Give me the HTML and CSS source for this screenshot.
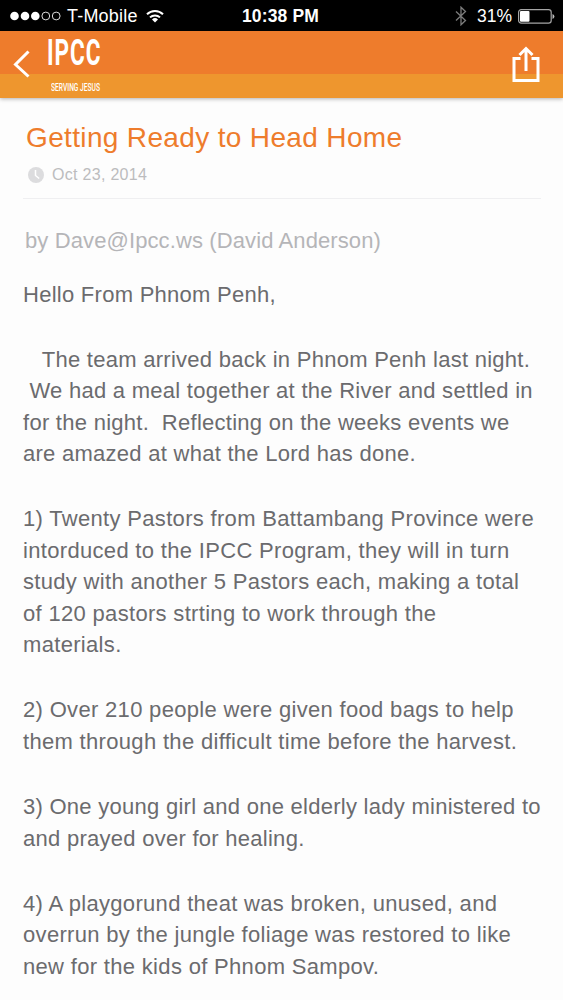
FILE: index.html
```html
<!DOCTYPE html>
<html lang="en">
<head>
  <meta charset="UTF-8">
  <meta name="viewport" content="width=device-width, initial-scale=1.0">
  <title>Getting Ready to Head Home</title>
  <link rel="stylesheet" href="styles.css">
</head>
<body>

  <!-- Status Bar -->
  <div class="status-bar">
    <div class="status-left">
      <svg class="signal" width="52" height="10" viewBox="0 0 52 10">
        <g fill="#fff">
          <circle cx="4.5" cy="5" r="4.3"/>
          <circle cx="15" cy="5" r="4.3"/>
          <circle cx="25.3" cy="5" r="4.3"/>
        </g>
        <g fill="none" stroke="#ddd" stroke-width="1">
          <circle cx="35.8" cy="5" r="3.9"/>
          <circle cx="46.2" cy="5" r="3.9"/>
        </g>
      </svg>
      <span class="carrier">T-Mobile</span>
      <svg class="wifi" width="18" height="14" viewBox="0 0 18 14">
        <g fill="none" stroke="#fff" stroke-width="2">
          <path d="M1 5.2a11.4 11.4 0 0 1 16 0"/>
          <path d="M4 8.4a7.2 7.2 0 0 1 10 0"/>
        </g>
        <path d="M9 13.4 6 10.4a4.3 4.3 0 0 1 6 0z" fill="#fff"/>
      </svg>
    </div>
    <span class="time">10:38 PM</span>
    <div class="status-right">
      <svg class="bluetooth" width="12" height="20" viewBox="0 0 12 20">
        <path d="M1 5.5l9.500 9L6 18.800V1.200l4.500 4.300-9.500 9" fill="none" stroke="#7c7c7c" stroke-width="1.3"/>
      </svg>
      <span class="percent">31%</span>
      <svg class="battery" width="37" height="15" viewBox="0 0 37 15">
        <rect x=".6" y=".6" width="32.6" height="13.6" rx="2.6" fill="none" stroke="#a5a5a5" stroke-width="1.2"/>
        <rect x="2" y="2" width="9.5" height="10.8" rx="1" fill="#fff"/>
        <path d="M34.5 5a2.6 2.6 0 0 1 0 5z" fill="#bbb"/>
      </svg>
    </div>
  </div>

  <!-- Header -->
  <header class="nav-bar">
    <svg class="back" width="18" height="30" viewBox="0 0 18 30">
      <path d="M15.500 1.500 2.500 14.500l13 12" fill="none" stroke="#fff" stroke-width="3"/>
    </svg>
    <div class="logo">
      <span class="logo-name">IPCC</span>
      <span class="logo-tagline">SERVING JESUS</span>
    </div>
    <svg class="share" width="28" height="37" viewBox="0 0 28 37">
      <g fill="none" stroke="#fff" stroke-width="3">
        <path d="M8.500 12.500H2v22h24v-22h-6.500"/>
        <path d="M14 25V2.500M7.500 9 14 2.500 20.500 9"/>
      </g>
    </svg>
  </header>

  <!-- Article -->
  <main class="article">
    <h1 class="title">Getting Ready to Head Home</h1>
    <div class="date">
      <svg class="clock" width="16" height="16" viewBox="0 0 16 16">
        <circle cx="8" cy="8" r="8" fill="#dcdcde"/>
        <path d="M7.500 3v5.500l3.700 3" fill="none" stroke="#fff" stroke-width="1.500"/>
      </svg>
      <span>Oct 23, 2014</span>
    </div>
    <p class="author">by Dave@Ipcc.ws (David Anderson)</p>

    <div class="content">
      <p>Hello From Phnom Penh,</p>
      <p>&nbsp;&nbsp; The team arrived back in Phnom Penh last night.<br>&nbsp;We had a meal together at the River and settled in<br>for the night.&nbsp; Reflecting on the weeks events we<br>are amazed at what the Lord has done.</p>
      <p class="loose">1) Twenty Pastors from Battambang Province were<br>intorduced to the IPCC Program, they will in turn<br>study with another 5 Pastors each, making a total<br>of 120 pastors strting to work through the<br>materials.</p>
      <p class="loose">2) Over 210 people were given food bags to help<br>them through the difficult time before the harvest.</p>
      <p>3) One young girl and one elderly lady ministered to<br>and prayed over for healing.</p>
      <p class="loose">4) A playgorund theat was broken, unused, and<br>overrun by the jungle foliage was restored to like<br>new for the kids of Phnom Sampov.</p>
    </div>
  </main>

</body>
</html>
```
FILE: styles.css
```css
/* Basic Reset */
* {
  margin: 0;
  padding: 0;
  box-sizing: border-box;
}

body {
  font-family: "Liberation Sans", Arial, sans-serif;
  background: #fdfdfd;
  height: 1000px;
  overflow: hidden;
}

svg {
  display: block;
}

/* Status Bar */
.status-bar {
  display: grid;
  grid-template-columns: 1fr auto 1fr;
  align-items: center;
  height: 31px;
  padding: 1px 8px 0 10px;
  background: #000;
  color: #fff;
  font-size: 18px;
}

.status-left,
.status-right {
  display: flex;
  align-items: center;
}

.status-right {
  justify-content: flex-end;
}

.carrier {
  margin: 0 8px 0 5px;
  letter-spacing: 0.2px;
}

.time {
  padding-right: 4px;
  font-weight: bold;
  font-size: 17.5px;
  letter-spacing: 0.15px;
}

.percent {
  margin: 0 6px 0 10px;
  font-size: 17.5px;
}

/* Header */
.nav-bar {
  display: flex;
  align-items: flex-start;
  height: 67px;
  padding: 0 23px 0 13px;
  background: linear-gradient(#ee7c2c 0 43.5px, #ee962e 43.5px);
  box-shadow: 0 1px 4px rgba(0, 0, 0, 0.3);
  color: #fff;
}

.back {
  margin-top: 19px;
}

.logo {
  display: flex;
  flex-direction: column;
  width: 60px;
  margin-left: 16px;
  font-family: Roboto, sans-serif;
  white-space: nowrap;
}

.logo-name {
  font-size: 37px;
  font-weight: 700;
  line-height: 44px;
  letter-spacing: 1.5px;
  transform: scaleX(0.61);
  transform-origin: left;
}

.logo-tagline {
  margin: 7px 0 0 4px;
  font-size: 10.5px;
  font-weight: 500;
  line-height: 12px;
  transform: scaleX(0.635);
  transform-origin: left;
}

.share {
  margin: 15px 0 0 auto;
}

/* Article */
.article {
  padding: 22px 22px 0 23px;
}

.title {
  padding-left: 3px;
  color: #ee7c2c;
  font-size: 28px;
  font-weight: normal;
  line-height: 36px;
  letter-spacing: 0.35px;
}

.date {
  display: flex;
  align-items: center;
  gap: 8px;
  height: 43px;
  padding: 0 0 5px 5px;
  border-bottom: 1px solid #efeff1;
  color: #bcbcbe;
  font-size: 16px;
  letter-spacing: 0.3px;
}

.author {
  margin-top: 27px;
  padding-left: 2px;
  color: #b5b5b8;
  font-size: 22px;
  line-height: 30px;
  letter-spacing: 0.11px;
}

.content {
  margin-top: 22.5px;
  color: #6b6b6e;
  font-size: 22px;
  line-height: 31.45px;
  letter-spacing: 0.27px;
}

.content p {
  margin-bottom: 33.8px;
  white-space: nowrap;
}

.content .loose {
  letter-spacing: 0.32px;
}
```
